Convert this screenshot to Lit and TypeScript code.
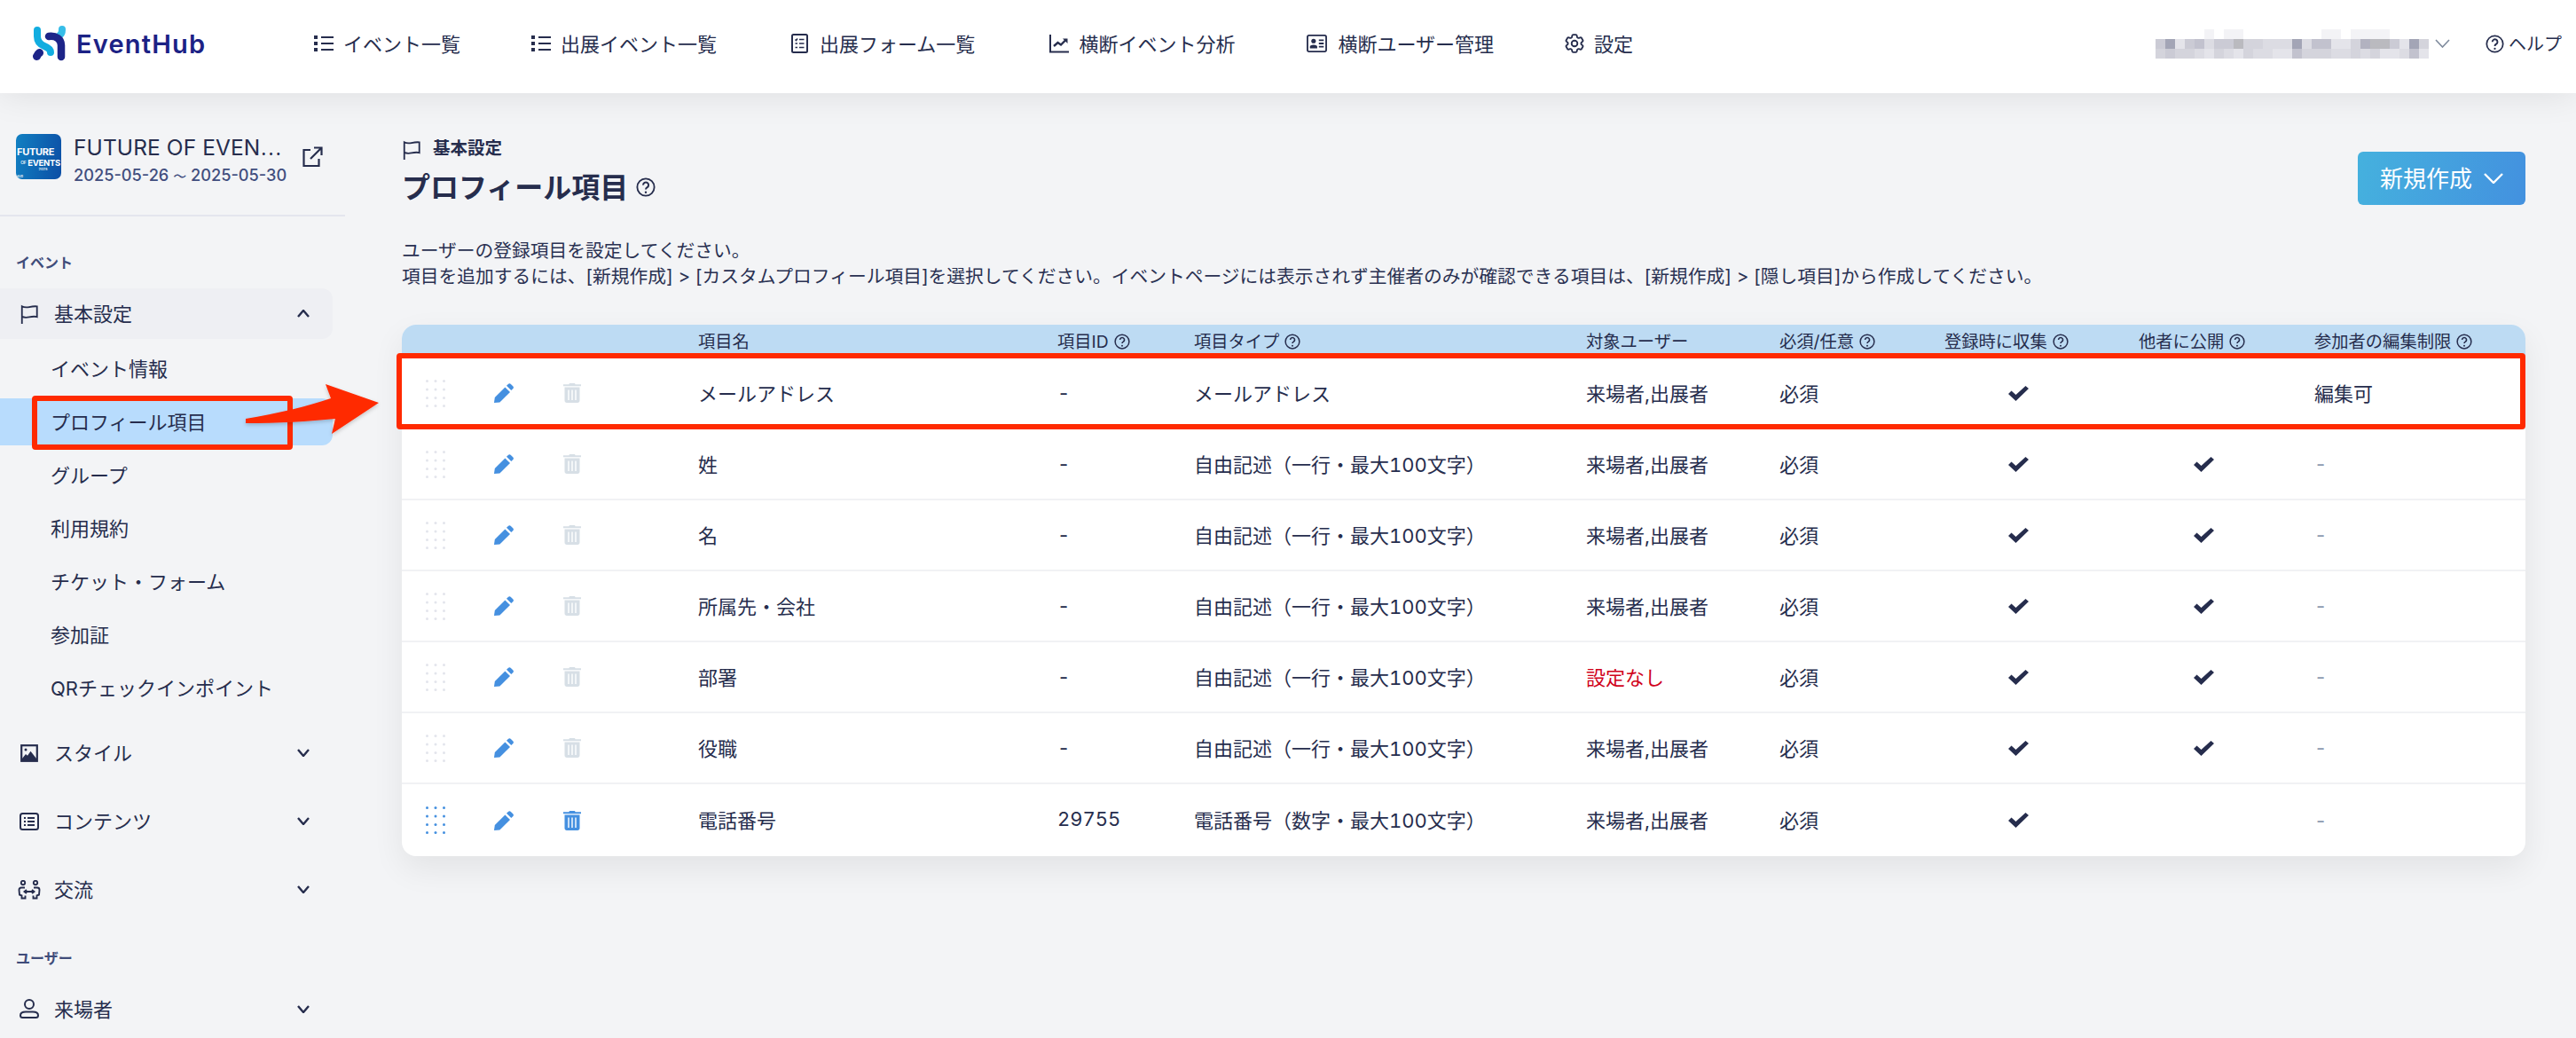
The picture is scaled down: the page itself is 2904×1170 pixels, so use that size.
import { LitElement, html, css, svg } from "lit";
import { customElement } from "lit/decorators.js";

const help = (cls = "hp") => html`<svg class=${cls} viewBox="0 0 24 24" fill="none" stroke="currentColor" stroke-width="2"><circle cx="12" cy="12" r="10.5"/><path d="M8.8 9.4a3.3 3.3 0 1 1 5 2.8c-1.2.7-1.8 1.3-1.8 2.6" stroke-width="2.2"/><circle cx="12" cy="18.2" r="1.3" fill="currentColor" stroke="none"/></svg>`;

const flag = html`<svg class="ic" viewBox="0 0 22 24" fill="none" stroke="currentColor" stroke-width="2"><path d="M2 24V2.5c2.5 1.4 5.5 1.6 9 .8s6.500-1 9.500-.8V15.500c-2.500-.8-5.500-.6-9.500.2s-6.500.6-9-.5"/></svg>`;

const listIcon = html`<svg class="ni w22" viewBox="0 0 22 22" fill="currentColor"><rect x="0" y="2" width="4" height="4"/><rect x="0" y="9" width="4" height="4"/><rect x="0" y="16" width="4" height="4"/><rect x="8" y="3" width="14" height="2"/><rect x="8" y="10" width="14" height="2"/><rect x="8" y="17" width="14" height="2"/></svg>`;
const navIcons = [
  listIcon,
  listIcon,
  html`<svg class="ni w19" viewBox="0 0 19 22" fill="none" stroke="currentColor" stroke-width="2"><rect x="1" y="1" width="17" height="20" rx="1.500"/><path d="M4.500 6.500l1 1 1.500-2M4.500 11h2.500M4.500 15.500h2.500M9 6.500h5.500M9 11h5.500M9 15.500h5.500" stroke-width="1.500"/></svg>`,
  html`<svg class="ni w22" viewBox="0 0 22 22" fill="none" stroke="currentColor" stroke-width="2"><path d="M1 1v19.500h21"/><path d="M5 14l4.500-4 3.500 2.500 6-6" stroke-width="2.400"/><path d="M15 5.500h5.500V11z" fill="currentColor" stroke="none"/></svg>`,
  html`<svg class="ni w25" viewBox="0 0 25 24" fill="none" stroke="currentColor" stroke-width="2"><rect x="1" y="2" width="23" height="20" rx="2"/><circle cx="8.500" cy="9" r="2.800" fill="currentColor" stroke="none"/><path d="M4 18v-2c0-1.500 1.500-2.500 4.500-2.500s4.500 1 4.500 2.500v2z" fill="currentColor" stroke="none"/><path d="M15 8h6M15 12h6M15 16h6"/></svg>`,
  html`<svg class="ni w22" viewBox="2 2 20 20" fill="none" stroke="currentColor" stroke-width="1.700"><path d="M9.594 3.940c.09-.542.56-.94 1.110-.94h2.593c.55 0 1.020.398 1.110.94l.213 1.281c.063.374.313.686.645.870.074.04.147.083.22.127.325.196.72.257 1.075.124l1.217-.456a1.125 1.125 0 0 1 1.370.49l1.296 2.247a1.125 1.125 0 0 1-.26 1.431l-1.003.827c-.293.241-.438.613-.43.992a7.723 7.723 0 0 1 0 .255c-.008.378.137.75.43.991l1.004.827c.424.35.534.955.26 1.430l-1.298 2.247a1.125 1.125 0 0 1-1.369.491l-1.217-.456c-.355-.133-.75-.072-1.076.124a6.470 6.470 0 0 1-.22.128c-.331.183-.581.495-.644.869l-.213 1.281c-.09.543-.56.94-1.110.94h-2.594c-.55 0-1.019-.398-1.110-.94l-.213-1.281c-.062-.374-.312-.686-.644-.87a6.520 6.520 0 0 1-.22-.127c-.325-.196-.72-.257-1.076-.124l-1.217.456a1.125 1.125 0 0 1-1.369-.49l-1.297-2.247a1.125 1.125 0 0 1 .26-1.431l1.004-.827c.292-.24.437-.613.43-.991a6.932 6.932 0 0 1 0-.255c.007-.38-.138-.751-.43-.992l-1.004-.827a1.125 1.125 0 0 1-.26-1.430l1.297-2.247a1.125 1.125 0 0 1 1.370-.491l1.216.456c.356.133.751.072 1.076-.124.072-.044.146-.086.22-.128.332-.183.582-.495.644-.869l.214-1.280Z"/><circle cx="12" cy="12" r="3"/></svg>`,
];
const navItems = ["イベント一覧", "出展イベント一覧", "出展フォーム一覧", "横断イベント分析", "横断ユーザー管理", "設定"];

const chevDown = html`<svg class="chev" viewBox="0 0 14 9" fill="none" stroke="currentColor" stroke-width="2.400"><path d="M1 1l6 7 6-7"/></svg>`;
const chevUp = html`<svg class="chev" viewBox="0 0 14 9" fill="none" stroke="currentColor" stroke-width="2.400"><path d="M1 8l6-7 6 7"/></svg>`;

const styleIcon = html`<svg class="ic" viewBox="0 0 22 22"><rect x="2.200" y="2.200" width="17.600" height="17.600" fill="none" stroke="currentColor" stroke-width="2.200"/><path d="M3 17l4-5 2 1.800 3.500-5 6.500 8.200v2H3z" fill="currentColor"/><circle cx="7" cy="7" r="1.500" fill="currentColor"/></svg>`;
const contentIcon = html`<svg class="ic" viewBox="0 0 22 22" fill="none" stroke="currentColor" stroke-width="2"><rect x="1" y="2" width="20" height="18" rx="2.500"/><path d="M5 7h2M5 11h2M5 15h2M9 7h8M9 11h8M9 15h8"/></svg>`;
const exchangeIcon = html`<svg class="ic wide" viewBox="0 0 26 22" fill="none" stroke="currentColor" stroke-width="1.900"><circle cx="6" cy="3" r="2.200"/><circle cx="20" cy="3" r="2.200"/><path d="M8 8.500H4C2.500 8.500 1.500 9.500 1.500 11l.5 5.500 2.500 1v3h4v-3"/><path d="M18 8.500h4c1.500 0 2.500 1 2.500 2.500l-.5 5.500-2.500 1v3h-4v-3"/><path d="M8 13h10M10 11l-2.500 2 2.500 2M16 11l2.500 2-2.500 2"/></svg>`;
const userIcon = html`<svg class="ic" viewBox="0 0 22 22" fill="none" stroke="currentColor" stroke-width="2"><circle cx="11" cy="6" r="5"/><path d="M7 14.500h8c3.500 0 6 1.500 6 4 0 1.500-1 2.500-2.500 2.500h-15C2 21 1 20 1 18.500c0-2.500 2.500-4 6-4z"/></svg>`;

const dots = html`<svg class="dots" viewBox="0 0 22 31" fill="currentColor">${[1.5, 11, 20.5].map((x) => [1.5, 11, 20.5, 29.5].map((y) => svg`<circle cx=${x} cy=${y} r="1.500"/>`))}</svg>`;
const pencil = html`<svg class="pen" viewBox="0 0 22 22" fill="currentColor"><path d="M0 22l.8-6L12.400 4.400 18 10 6.400 21.400z"/><path d="M14 2.800l1.900-1.900c1-1 2-1 3 0l2.300 2.300c1 1 1 2 0 3L19.300 8z"/></svg>`;
const trash = html`<svg class="tr" viewBox="0 0 20 22"><path fill="currentColor" d="M7 0h6l.6 1.200H20v2H0v-2h6.400zM1.500 4.600h17V19.500c0 1.500-1 2.500-2.500 2.500H4c-1.500 0-2.500-1-2.500-2.500z"/><path d="M6 7.500V19M10 7.500V19M14 7.500V19" stroke="#fff" stroke-width="1.400"/></svg>`;
const check = html`<svg class="chk" viewBox="0 0 23 17" fill="currentColor"><path d="M0 9l3.500-3.500L8.500 10 19.500 0 23 3 8.500 17z"/></svg>`;

const heads = [
  ["", false], ["", false], ["", false],
  ["項目名", false], ["項目ID", true], ["項目タイプ", true], ["対象ユーザー", false],
  ["必須/任意", true], ["登録時に収集", true], ["他者に公開", true], ["参加者の編集制限", true],
] as [string, boolean][];

const FREE = "自由記述（一行・最大100文字）";
const BOTH = "来場者,出展者";
const rows = [
  { name: "メールアドレス", id: "-", type: "メールアドレス", target: BOTH, pub: false, edit: "編集可" },
  { name: "姓", id: "-", type: FREE, target: BOTH, pub: true, edit: "-" },
  { name: "名", id: "-", type: FREE, target: BOTH, pub: true, edit: "-" },
  { name: "所属先・会社", id: "-", type: FREE, target: BOTH, pub: true, edit: "-" },
  { name: "部署", id: "-", type: FREE, target: "設定なし", pub: true, edit: "-", warn: true },
  { name: "役職", id: "-", type: FREE, target: BOTH, pub: true, edit: "-" },
  { name: "電話番号", id: "29755", type: "電話番号（数字・最大100文字）", target: BOTH, pub: false, edit: "-", live: true },
];

const mosaic = [
  "0000010110000000011011110000",
  "5925635574433393662248775294",
  "4544324324332264443343422362",
];
const shades = ["#ffffff", "#f3f3f6", "#e4e4ea", "#dcdce3", "#d4d4dc", "#cbcbd5", "#c2c2ce", "#bababf", "#b2b2c0", "#a3a5b6"];

@customElement("sidebar-panel")
class SidebarPanel extends LitElement {
  static styles = css`
    :host { display: block; width: 390px; flex: none; color: #262d4d; padding-top: 46px; }
    .event { display: flex; width: 389px; height: 93px; padding: 0 0 40px 18px; border-bottom: 2px solid #e4e6ee; box-sizing: border-box; align-items: flex-start; }
    .thumb { width: 51px; height: 51px; border-radius: 7px; background: linear-gradient(100deg, #1180c2, #0c4ea5); color: #fff; flex: none; overflow: hidden; font-family: "Inter", sans-serif; display: flex; flex-direction: column; font-weight: 700; line-height: 1; padding: 15px 0 0 0; box-sizing: border-box; }
    .thumb .a { font-size: 11px; white-space: nowrap; letter-spacing: -.3px; padding-left: 1px; }
    .thumb .b { font-size: 9.500px; white-space: nowrap; margin-top: 2px; letter-spacing: -.3px; display: flex; align-items: center; justify-content: flex-end; gap: 2px; padding-right: 1px; }
    .thumb .b small { font-size: 5px; font-weight: 500; }
    .thumb .c { font-size: 4px; text-align: center; font-weight: 500; padding-left: 10px; }
    .thumb .d { font-size: 4px; margin-top: 4px; font-weight: 500; }
    .ev-text { margin-left: 14px; width: 240px; flex: none; }
    .ev-title { font-size: 24.500px; line-height: 28px; white-space: nowrap; letter-spacing: .1px; }
    .ev-title span { font-family: "Noto Sans CJK JP", sans-serif; font-size: 22px; }
    .ev-date { font-size: 18.200px; line-height: 24px; margin-top: 5px; color: #414e7e; white-space: nowrap; font-weight: 500; }
    .ev-date span { font-size: 15px; }
    .ext { width: 24px; height: 24px; margin: 14px 0 0 17px; flex: none; }
    .label { font-size: 16px; line-height: 14px; font-weight: 700; color: #3f4c7a; padding-left: 18px; }
    .label.first { margin-top: 45px; margin-bottom: 22px; }
    .label.second { margin-top: 42px; margin-bottom: 21.500px; }
    .item { display: flex; align-items: center; height: 57px; width: 375px; box-sizing: border-box; padding: 0 26px 0 22px; font-size: 22px; }
    .item.open { background: #eeeff3; border-radius: 0 12px 12px 0; margin-bottom: 7px; }
    .item .t { margin-left: 17px; flex: 1; padding-bottom: 3px; }
    .item + .item { margin-top: 20px; }
    .ic { width: 22px; height: 22px; flex: none; }
    .ic.wide { width: 26px; margin: 0 -2px; }
    .chev { width: 14px; height: 9px; flex: none; }
    .sub { display: flex; align-items: center; height: 53px; width: 375px; padding: 0 0 3px 57px; box-sizing: border-box; font-size: 22px; }
    .sub + .sub { margin-top: 7px; }
    .sub.on { background: #b8dcfd; border-radius: 0 12px 12px 0; }
    .subs { margin-bottom: 18px; }
  `;
  render() {
    const subs = ["イベント情報", "プロフィール項目", "グループ", "利用規約", "チケット・フォーム", "参加証", "QRチェックインポイント"];
    return html`
      <div class="event">
        <div class="thumb"><div class="a">FUTURE</div><div class="b"><small>OF</small>EVENTS</div><div class="c">2025</div><div class="d">Hub</div></div>
        <div class="ev-text">
          <div class="ev-title">FUTURE OF EVEN<span>⋯</span></div>
          <div class="ev-date">2025-05-26 <span>〜</span> 2025-05-30</div>
        </div>
        <svg class="ext" viewBox="0 0 24 24" fill="none" stroke="currentColor" stroke-width="2.200"><path d="M10 4H2.500v18h17v-8M14 1.500h8.500V10M22.500 1.500L10 14"/></svg>
      </div>
      <div class="label first">イベント</div>
      <div class="item open">${flag}<span class="t">基本設定</span>${chevUp}</div>
      <div class="subs">${subs.map((s, i) => html`<div class="sub ${i === 1 ? "on" : ""}">${s}</div>`)}</div>
      <div class="item">${styleIcon}<span class="t">スタイル</span>${chevDown}</div>
      <div class="item">${contentIcon}<span class="t">コンテンツ</span>${chevDown}</div>
      <div class="item">${exchangeIcon}<span class="t">交流</span>${chevDown}</div>
      <div class="label second">ユーザー</div>
      <div class="item">${userIcon}<span class="t">来場者</span>${chevDown}</div>
    `;
  }
}

@customElement("app-root")
export class AppRoot extends LitElement {
  static styles = css`
    :host { display: block; position: relative; width: 2904px; height: 1170px; overflow: hidden; background: #f3f4f6; font-family: "Inter", "Noto Sans CJK JP", sans-serif; color: #262d4d; }
    header { position: relative; z-index: 1; height: 105px; background: #fff; display: flex; align-items: center; box-shadow: 0 0 40px rgba(0, 0, 0, .1); padding: 0 16px 7px 37px; box-sizing: border-box; }
    .logo { display: flex; align-items: center; width: 192px; flex: none; }
    .logo svg { width: 38px; height: 40px; flex: none; }
    .logo span { margin-left: 11px; font-size: 29px; font-weight: 600; color: #1c2285; letter-spacing: 1.200px; line-height: 1; }
    nav { display: flex; align-items: center; gap: 80px; margin-left: 125px; }
    .nav-i { display: flex; align-items: center; gap: 11px; font-size: 22px; white-space: nowrap; }
    .nav-i span { padding-bottom: 2px; }
    .nav-i.n2 { margin-left: 4px; gap: 13px; }
    .nav-i.n3 { margin-left: 4px; }
    .ni { height: 22px; flex: none; }
    .w19 { width: 19px; }
    .w22 { width: 22px; }
    .w25 { width: 25px; }
    .right { margin-left: auto; display: flex; align-items: center; }
    .mosaic { display: grid; grid-template-columns: repeat(28, 11px); grid-auto-rows: 11px; }
    .uchev { width: 17px; height: 10px; margin-left: 7px; color: #7e8a9c; }
    .helpnav { display: flex; align-items: center; margin-left: 40px; gap: 5px; font-size: 20px; }
    .helpnav span { padding-bottom: 2px; }
    .helpnav .hq { width: 21px; height: 21px; }
    .body { display: flex; }
    main { flex: 1; padding: 52px 57px 0 63px; min-width: 0; }
    .head { display: flex; justify-content: space-between; align-items: flex-end; height: 74px; }
    .crumb { display: flex; align-items: center; gap: 13px; height: 24px; font-size: 19.500px; font-weight: 700; }
    .crumb span { padding-bottom: 7px; }
    .crumb svg { width: 22px; height: 22px; }
    .title { display: flex; align-items: center; gap: 9px; margin-top: 10px; height: 40px; font-size: 32px; font-weight: 700; }
    .title span { padding-bottom: 4px; }
    .title .ht { width: 22px; height: 22px; }
    .btn { width: 189px; height: 60px; display: flex; align-items: center; justify-content: center; gap: 13px; border-radius: 6px; color: #fff; font-size: 26px; background: linear-gradient(100deg, #45b1de, #4391df); }
    .btn span { padding-bottom: 3px; }
    .btn svg { width: 22px; height: 12px; }
    .desc { margin-top: 36.500px; font-size: 20.750px; line-height: 29px; color: #2a3152; }
    .table { margin-top: 40.500px; background: #fff; border-radius: 16px; box-shadow: 0 14px 36px rgba(0, 0, 0, .07); }
    .row { display: grid; grid-template-columns: 104px 78px 152px 405px 154px 442px 218px 186px 219px 198px 238px; align-items: center; }
    .row.hd { height: 38px; background: #bddbf3; border-radius: 16px 16px 0 0; font-size: 19.300px; }
    .row.hd .cell span { padding-bottom: 2px; }
    .row.bd { height: 80px; font-size: 22px; border-bottom: 2px solid #f1f2f4; box-sizing: border-box; font-variant-numeric: tabular-nums; }
    .row.bd:last-child { border-bottom: 0; height: 81px; }
    .cell { display: flex; align-items: center; gap: 6px; white-space: nowrap; }
    .row.bd .tx { padding-bottom: 3px; }
    .hp { width: 18px; height: 18px; flex: none; }
    .cell.drag { padding-left: 27px; }
    .dots { width: 22px; height: 31px; color: #e3e5ec; }
    .pen { width: 22px; height: 22px; color: #4590e0; }
    .tr { width: 20px; height: 22px; color: #d7dfe6; }
    .live .dots, .live .tr { color: #4590e0; }
    .chk { width: 23px; height: 17px; color: #262d4d; }
    .c1 { padding-left: 72px; }
    .c2 { padding-left: 62px; }
    .warn { color: #d0021b; }
    .muted { color: #8d9ab0; }
    .row.bd .dash { padding-bottom: 0; }
    .marks { position: absolute; left: 0; top: 0; width: 2904px; height: 1170px; z-index: 2; pointer-events: none; }
  `;
  render() {
    return html`
      <header>
        <div class="logo">
          <svg viewBox="0 0 38 40" fill="none" stroke-linecap="round">
            <path d="M5 5v7c0 6 3 9 8 11s7 4 7 7" stroke="#12ade0" stroke-width="8"/>
            <path d="M33 4v.5c0 3-1 5-2.500 6" stroke="#37bde8" stroke-width="8"/>
            <path d="M18 12c8-1 14 3 14 10v13" stroke="#1d2488" stroke-width="8.500"/>
            <path d="M4.500 34.500c.5-1.500 1.500-3 3-4" stroke="#1d2488" stroke-width="9"/>
          </svg>
          <span>EventHub</span>
        </div>
        <nav>${navItems.map((n, i) => html`<div class="nav-i n${i}">${navIcons[i]}<span>${n}</span></div>`)}</nav>
        <div class="right">
          <div class="mosaic">${mosaic.map((r) => [...r].map((c) => html`<i style="background:${shades[+c]}"></i>`))}</div>
          <svg class="uchev" viewBox="0 0 17 10" fill="none" stroke="currentColor" stroke-width="1.600"><path d="M1 1l7.500 8L16 1"/></svg>
          <div class="helpnav">${help("hq")}<span>ヘルプ</span></div>
        </div>
      </header>
      <div class="body">
        <sidebar-panel></sidebar-panel>
        <main>
          <div class="head">
            <div>
              <div class="crumb">${flag}<span>基本設定</span></div>
              <div class="title"><span>プロフィール項目</span>${help("ht")}</div>
            </div>
            <div class="btn"><span>新規作成</span><svg viewBox="0 0 22 12" fill="none" stroke="currentColor" stroke-width="2.400"><path d="M1 1l10 10L21 1"/></svg></div>
          </div>
          <div class="desc">
            ユーザーの登録項目を設定してください。<br />
            項目を追加するには、[新規作成] &gt; [カスタムプロフィール項目]を選択してください。イベントページには表示されず主催者のみが確認できる項目は、[新規作成] &gt; [隠し項目]から作成してください。
          </div>
          <div class="table">
            <div class="row hd">${heads.map(([t, h]) => html`<div class="cell"><span>${t}</span>${h ? help() : ""}</div>`)}</div>
            ${rows.map((r) => html`
              <div class="row bd ${r.live ? "live" : ""}">
                <div class="cell drag">${dots}</div>
                <div class="cell">${pencil}</div>
                <div class="cell">${trash}</div>
                <div class="cell"><span class="tx">${r.name}</span></div>
                <div class="cell"><span class="tx ${r.id === "-" ? "dash" : ""}">${r.id}</span></div>
                <div class="cell"><span class="tx">${r.type}</span></div>
                <div class="cell ${r.warn ? "warn" : ""}"><span class="tx">${r.target}</span></div>
                <div class="cell"><span class="tx">必須</span></div>
                <div class="cell c1">${check}</div>
                <div class="cell c2">${r.pub ? check : ""}</div>
                <div class="cell ${r.edit === "-" ? "muted" : ""}"><span class="tx ${r.edit === "-" ? "dash" : ""}">${r.edit}</span></div>
              </div>`)}
          </div>
        </main>
      </div>
      <svg class="marks" viewBox="0 0 2904 1170" fill="none">
        <defs><filter id="sh" x="-20%" y="-20%" width="140%" height="140%"><feDropShadow dx="0" dy="2" stdDeviation="2" flood-color="#000" flood-opacity=".2"/></filter></defs>
        <rect x="39" y="449" width="288" height="55" stroke="#ff2a00" stroke-width="6" rx="1"/>
        <rect x="450" y="401" width="2394" height="80" stroke="#ff2a00" stroke-width="6" rx="1"/>
        <path filter="url(#sh)" fill="#ff2a00" d="M277 472c35-6 70-14 96-23l-6-16 60 21-53 35 4-17c-30 3-65 5-101 5z"/>
      </svg>
    `;
  }
}
void SidebarPanel;
